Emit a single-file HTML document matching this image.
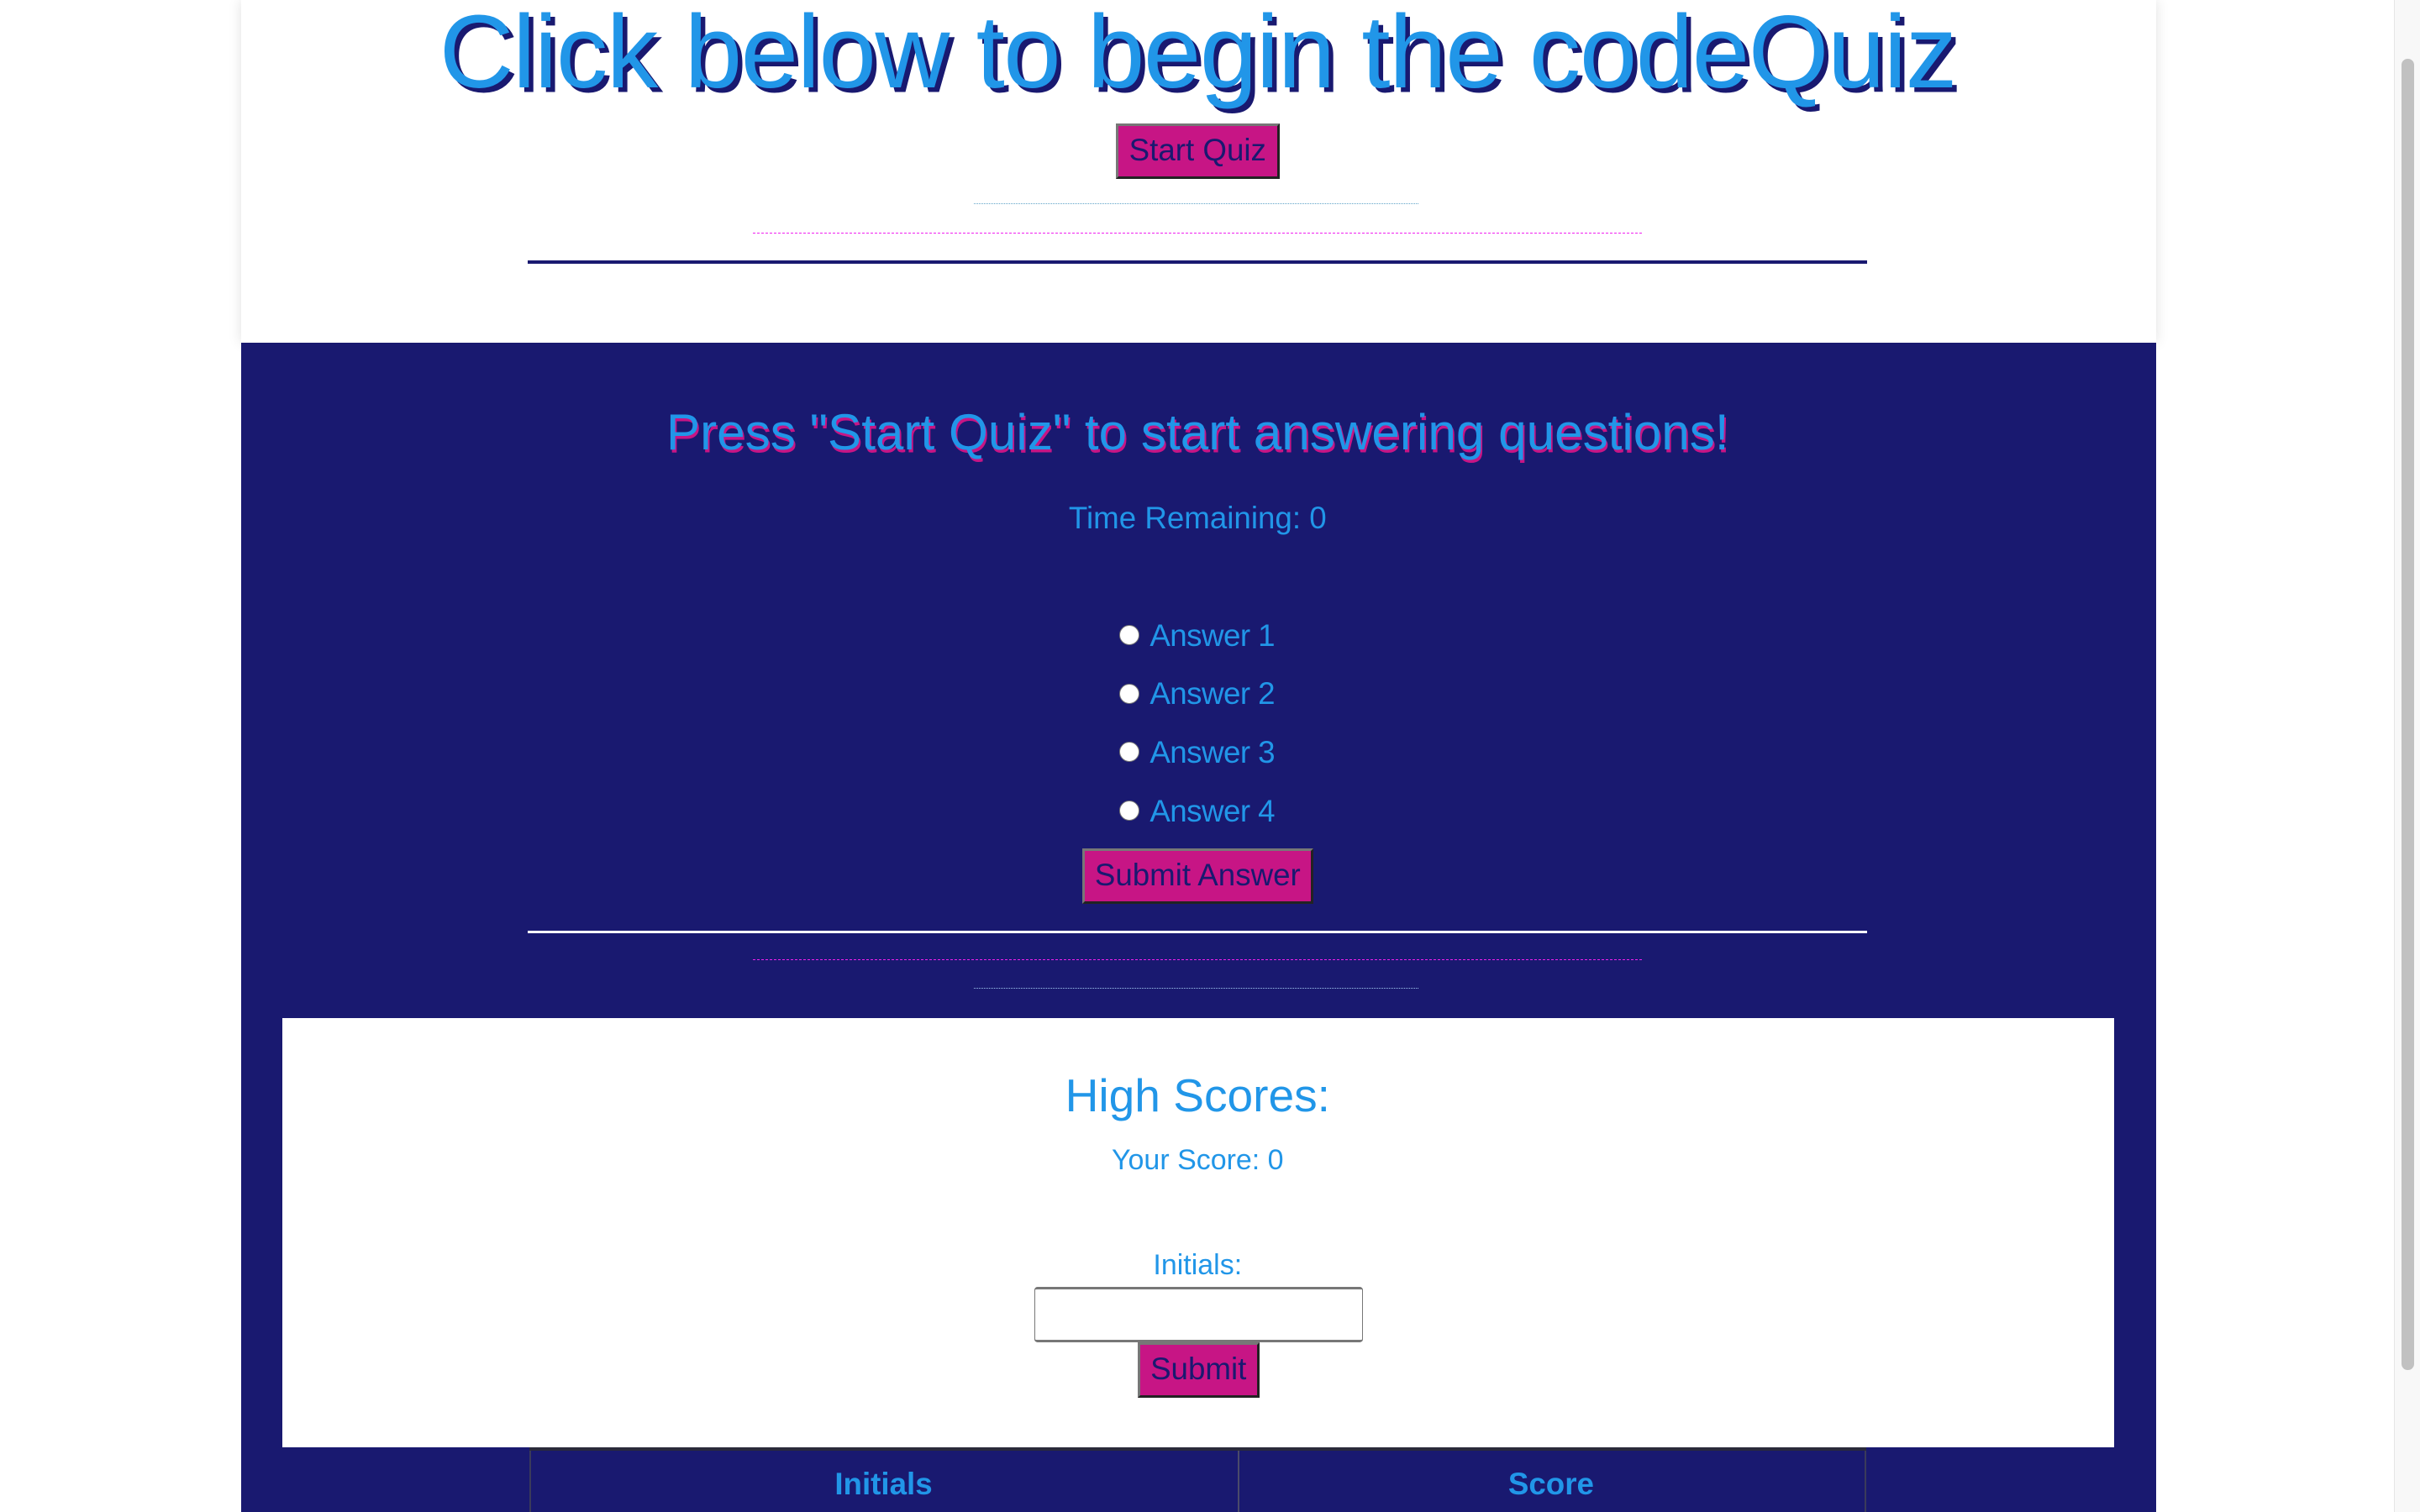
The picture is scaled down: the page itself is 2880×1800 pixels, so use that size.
<!DOCTYPE html>
<html><head><meta charset="utf-8"><style>
html{zoom:1.83673}
body{margin:0;width:1568px;height:980px;overflow:hidden;background:#fff;position:relative;font-family:"Liberation Sans",Arial,sans-serif}
.a{position:absolute}
.c{position:absolute;left:0;width:1552px;text-align:center;white-space:nowrap}
.btn{position:absolute;background:#c71585;color:#191970;font-size:20px;border:2px solid;border-color:#777 #222 #222 #777;box-sizing:border-box;text-align:center}
.blue{color:#2196e8}
</style></head><body>
<div class="a" style="left:156px;top:0;width:1241px;height:222px;background:#fff;box-shadow:0 0 8px rgba(0,0,0,.12)"></div>
<div class="c blue" style="top:-4px;font-size:67px;line-height:76px;letter-spacing:-0.8px;text-shadow:3px 3px 0 #191970">Click below to begin the codeQuiz</div>
<div class="btn" style="left:723px;top:80px;width:106px;height:36px;line-height:32px">Start Quiz</div>
<div class="a" style="left:631px;top:132px;width:288px;border-top:1px dotted #5fa4c8"></div>
<div class="a" style="left:488px;top:151px;width:576px;border-top:1px dashed #f020f0"></div>
<div class="a" style="left:342px;top:169px;width:868px;height:2px;background:#191970"></div>

<div class="a" style="left:156px;top:222px;width:1241px;height:758px;background:#191970"></div>
<div class="c blue" style="top:260px;font-size:32.8px;line-height:40px;text-shadow:1px 2px 0 #c71585">Press "Start Quiz" to start answering questions!</div>
<div class="c blue" style="top:324px;font-size:20px;line-height:24px">Time Remaining: 0</div>
<div class="a blue" style="left:725px;top:400px;font-size:20px;letter-spacing:-0.3px">
<div style="height:38px;line-height:24px;position:relative"><span class="a" style="left:0;top:5px;width:12px;height:12px;border-radius:50%;background:#fff;border:1px solid #777"></span><span style="margin-left:20px">Answer 1</span></div>
<div style="height:38px;line-height:24px;position:relative"><span class="a" style="left:0;top:5px;width:12px;height:12px;border-radius:50%;background:#fff;border:1px solid #777"></span><span style="margin-left:20px">Answer 2</span></div>
<div style="height:38px;line-height:24px;position:relative"><span class="a" style="left:0;top:5px;width:12px;height:12px;border-radius:50%;background:#fff;border:1px solid #777"></span><span style="margin-left:20px">Answer 3</span></div>
<div style="height:38px;line-height:24px;position:relative"><span class="a" style="left:0;top:5px;width:12px;height:12px;border-radius:50%;background:#fff;border:1px solid #777"></span><span style="margin-left:20px">Answer 4</span></div>
</div>
<div class="btn" style="left:701px;top:550px;width:150px;height:36px;line-height:32px">Submit Answer</div>
<div class="a" style="left:342px;top:603px;width:868px;height:2px;background:#fff"></div>
<div class="a" style="left:488px;top:622px;width:576px;border-top:1px dashed #f020f0"></div>
<div class="a" style="left:631px;top:640px;width:288px;border-top:1px dotted #a0c8f0"></div>

<div class="a" style="left:183px;top:660px;width:1187px;height:278px;background:#fff"></div>
<div class="c blue" style="top:692px;font-size:30px;line-height:36px">High Scores:</div>
<div class="c blue" style="top:741px;font-size:18.5px;line-height:22px">Your Score: 0</div>
<div class="c blue" style="top:809px;font-size:18.5px;line-height:22px">Initials:</div>
<div class="a" style="left:670px;top:834px;width:213px;height:36px;box-sizing:border-box;border:1px solid #777;border-top-width:2px;border-bottom-width:2px;border-radius:2px;background:#fff"></div>
<div class="btn" style="left:737px;top:870px;width:79px;height:36px;line-height:32px">Submit</div>
<div class="a" style="left:343px;top:938px;width:866px;height:2px;background:#2a2a3a"></div>
<div class="a" style="left:343px;top:940px;width:1px;height:40px;background:#3a3a5a"></div>
<div class="a" style="left:802px;top:940px;width:1px;height:40px;background:#4a4a6a"></div>
<div class="a" style="left:1208px;top:940px;width:1px;height:40px;background:#3a3a5a"></div>
<div class="a blue" style="left:343px;top:950px;width:459px;text-align:center;font-weight:bold;font-size:20px;line-height:24px">Initials</div>
<div class="a blue" style="left:802px;top:950px;width:406px;text-align:center;font-weight:bold;font-size:20px;line-height:24px">Score</div>

<div class="a" style="left:1551px;top:0;width:17px;height:980px;background:#f8f8f8;border-left:1px solid #e6e6e6;box-sizing:border-box"></div>
<div class="a" style="left:1556px;top:38px;width:8px;height:850px;border-radius:4px;background:#c1c1c1"></div>
</body></html>
